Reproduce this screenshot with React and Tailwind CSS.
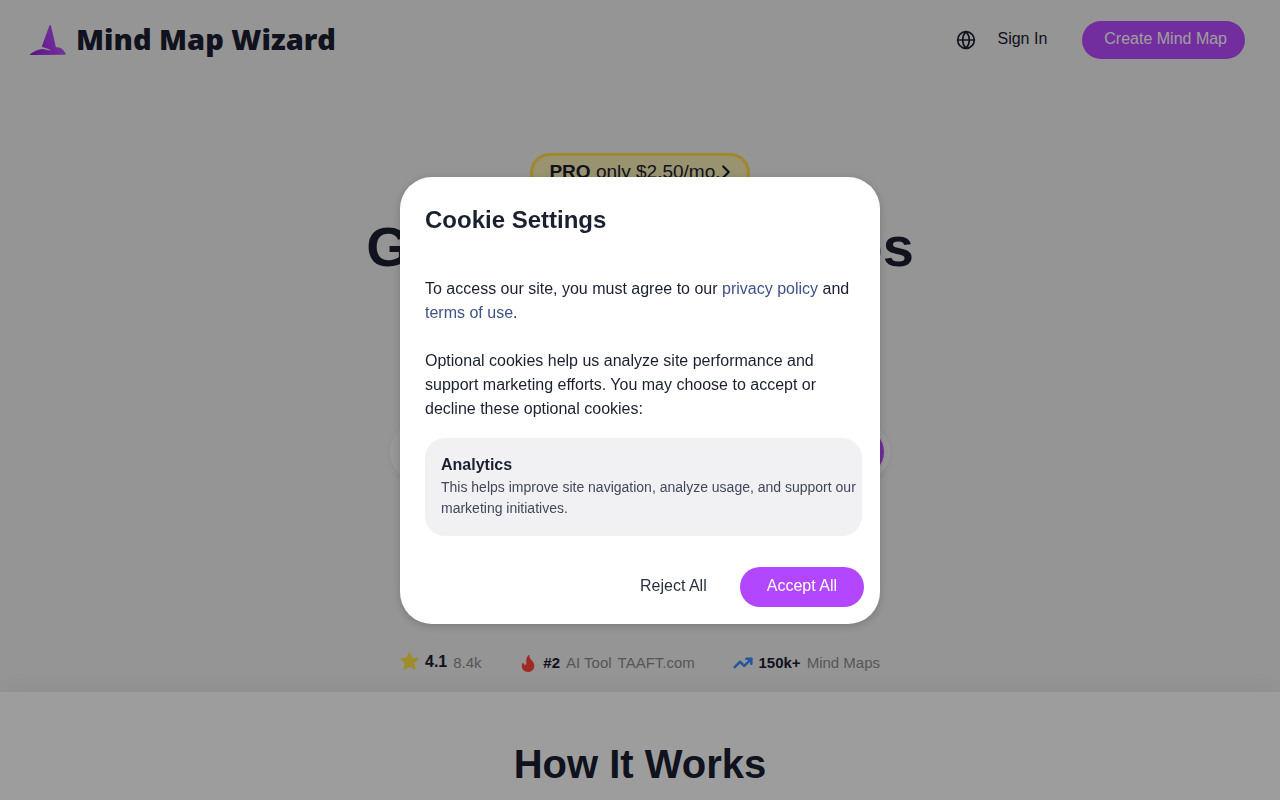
import { Globe, ChevronRight, TrendingUp } from "lucide-react";

function HatLogo() {
  return (
    <svg viewBox="0 0 36 30" className="h-[30px] w-9" aria-hidden="true">
      <defs>
        <linearGradient id="hat" x1="0" y1="1" x2="1" y2="0.7">
          <stop offset="0" stopColor="#8c22c8" />
          <stop offset="0.6" stopColor="#b03cf4" />
          <stop offset="1" stopColor="#b75cf5" />
        </linearGradient>
      </defs>
      <path
        fill="url(#hat)"
        d="M19.300.7c.4-.9 1.400-.9 1.700.1L25.900 22.200c2-.1 3.900.200 5.500 1.300 1.800 1.300 3.300 3.200 4.300 5.400.200.500 0 .9-.6.9L.5 30c-.6 0-.7-.5-.2-.9 2.600-2.200 6.900-4.500 11.700-5.200 3 .1 6 1.300 9.500 1.700-2.400-1.600-6-2.500-9.300-3.600-.4-.2-.4-.5-.2-.9z"
      />
    </svg>
  );
}

function Header() {
  return (
    <header className="flex h-20 items-center justify-between pl-[30px] pr-[35px]">
      <a href="#home" className="flex items-center gap-2.5">
        <HatLogo />
        <span className="pb-0.5 font-['Open_Sans','Noto_Sans',sans-serif] text-[29px] leading-10 font-extrabold">Mind Map Wizard</span>
      </a>
      <nav className="flex items-center">
        <button type="button" aria-label="Language" className="mr-[21px]">
          <Globe size={20} />
        </button>
        <a href="#signin" className="mr-[35px] pb-0.5">Sign In</a>
        <a href="#create" className="flex h-[38px] items-center rounded-full bg-[#b84bff] pr-[18px] pb-0.5 pl-[22px] text-white">
          Create Mind Map
        </a>
      </nav>
    </header>
  );
}

function Stats() {
  return (
    <div className="flex h-6 w-[480px] items-center justify-between text-[15px] leading-6 text-[#8b8b8f]">
      <div className="flex items-center gap-1.5">
        <svg viewBox="0 0 24 24" className="mb-1 h-[18px] w-[19px] fill-[#ffe24a]" aria-hidden="true">
          <path d="M10.800 1.200c.5-1.200 1.900-1.200 2.400 0l2.700 6.200 6.900.7c1.200.1 1.700 1.500.8 2.300l-5.200 4.700 1.500 6.900c.3 1.200-.9 2-1.900 1.400L12 19.900l-6 3.500c-1 .6-2.200-.2-1.900-1.400l1.500-6.900L.4 10.400c-.9-.8-.4-2.200.8-2.300l6.900-.7z" />
        </svg>
        <strong className="pb-0.5 text-base text-[#1a2030]">4.1</strong>
        <span>8.4k</span>
      </div>
      <div className="flex items-center gap-1.5">
        <svg viewBox="0 0 14 17" className="h-[17px] w-[18px] fill-[#ff4439]" aria-hidden="true">
          <path d="M7.400.2c.5-.4 1 0 1 .6 0 1.900 1 3 2.100 4.300C11.800 6.600 13.300 8.300 13.300 11 13.300 14.500 10.500 17 7 17S.8 14.700.8 11.600c0-1.500.2-2.600.7-3.600.3-.5.900-.4 1 .2.200.9.800 1.600 1.600 1.600 1 0 1.400-.9 1.300-1.900C5.100 5.200 5.300 2.300 7.400.2z" />
        </svg>
        <strong className="text-[#1a2030]">#2</strong>
        <span>AI Tool</span>
        <a href="#taaft">TAAFT.com</a>
      </div>
      <div className="flex items-center gap-1.5">
        <TrendingUp size={20} strokeWidth={3} className="text-[#3b8cff]" />
        <strong className="text-[#1a2030]">150k+</strong>
        <span>Mind Maps</span>
      </div>
    </div>
  );
}

function CookieDialog() {
  return (
    <div className="fixed inset-0 flex items-center justify-center bg-black/38">
      <section
        role="dialog"
        aria-modal="true"
        aria-labelledby="cookie-title"
        className="w-[480px] rounded-[32px] bg-white pt-[25px] pb-[17px] shadow-[0_2px_10px_rgba(0,0,0,0.2)]"
      >
        <div className="pr-[18px] pl-[25px]">
          <h2 id="cookie-title" className="text-2xl leading-9 font-bold">Cookie Settings</h2>
          <p className="mt-[39px] leading-6">
            To access our site, you must agree to our{" "}
            <a href="#privacy" className="text-[#3f5288]">privacy policy</a> and{" "}
            <a href="#terms" className="text-[#3f5288]">terms of use</a>.
          </p>
          <p className="mt-6 pr-8 leading-6">
            Optional cookies help us analyze site performance and support marketing efforts. You may choose to accept or decline these optional cookies:
          </p>
          <div className="mt-[17px] rounded-[20px] bg-[#f1f1f4] pt-[15px] pr-1 pb-[17px] pl-4">
            <h3 className="leading-6 font-bold">Analytics</h3>
            <p className="text-sm leading-[21px] text-[#414859]">
              This helps improve site navigation, analyze usage, and support our marketing initiatives.
            </p>
          </div>
        </div>
        <div className="mt-[31px] flex justify-end gap-2 pr-4">
          <button type="button" className="h-10 rounded-full px-[25px] pb-0.5 text-[#2a3142]">Reject All</button>
          <button type="button" className="h-10 rounded-full bg-[#b347ff] px-[27px] pb-0.5 text-white">Accept All</button>
        </div>
      </section>
    </div>
  );
}

export default function App() {
  return (
    <div className="h-screen overflow-hidden bg-[#f1f1f1] font-['Liberation_Sans',Arial,sans-serif] text-base text-[#1a2030]">
      <Header />
      <main>
        <section className="flex flex-col items-center pt-[73px] pb-[17px]">
          <a href="#pro" className="flex h-10 w-[220px] items-center justify-center rounded-[20px] border-3 border-[#ffdb48] bg-[#f8eeb4] pb-0.5 text-[19px]">
            <span><strong>PRO</strong> only $2.50/mo.</span>
            <ChevronRight size={22} strokeWidth={2.500} className="-mx-1.5" />
          </a>
          <h1 className="mt-[22px] text-[56px] leading-16 font-bold">Generate Mind Maps</h1>
          <form className="mt-[143px] flex h-[60px] w-[500px] items-center rounded-full bg-[#f6f6f6] p-1.5 shadow-[0_2px_8px_rgba(0,0,0,0.06)]">
            <input aria-label="Topic" className="min-w-0 flex-1 bg-transparent px-5 outline-none" />
            <button type="button" aria-label="Generate" className="flex size-12 items-center justify-center rounded-full bg-[#b84bff] text-white">
              <ChevronRight size={20} />
            </button>
          </form>
          <div className="mt-[169px]">
            <Stats />
          </div>
        </section>
        <section className="min-h-40 bg-[#fefefe] pt-12 text-center shadow-[0_-4px_24px_rgba(0,0,0,0.06)]">
          <h2 className="text-[40px] leading-12 font-bold">How It Works</h2>
        </section>
      </main>
      <CookieDialog />
    </div>
  );
}
